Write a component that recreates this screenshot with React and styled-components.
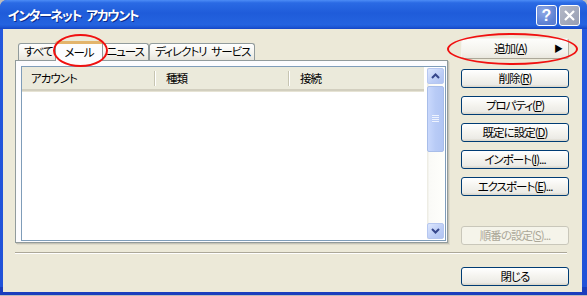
import styled, { createGlobalStyle } from "styled-components";

const GlobalStyle = createGlobalStyle`
  html, body {
    margin: 0;
    padding: 0;
    background: #bcbcbc;
  }
  body {
    font-family: "Noto Sans CJK JP", "Noto Sans", sans-serif;
    font-size: 11.5px;
    letter-spacing: -1px;
    font-feature-settings: "palt" 1;
    color: #000;
  }
`;

const Window = styled.div`
  position: relative;
  width: 587px;
  height: 295px;
  display: flex;
  flex-direction: column;
  border-radius: 7px 7px 0 0;
  overflow: hidden;
  background: #2152d8;
`;

const TitleBar = styled.div`
  height: 29px;
  flex: none;
  display: flex;
  align-items: center;
  padding: 0 7px 0 8px;
  box-sizing: border-box;
  background: linear-gradient(
    to bottom,
    #4c8cf6 0%,
    #2a6ae4 10%,
    #1f5cda 45%,
    #2463e0 85%,
    #1d57d5 93%,
    #1545c6 100%
  );
`;

const Title = styled.div`
  flex: 1;
  color: #fff;
  font-weight: bold;
  font-size: 13px;
  letter-spacing: -1.4px;
  text-shadow: 1px 1px 0 #0a2a8a;
  padding-bottom: 1px;
  white-space: pre;
`;

const Controls = styled.div`
  display: flex;
  gap: 2px;
  padding-top: 2px;
`;

const CtrlButton = styled.div`
  width: 21px;
  height: 21px;
  box-sizing: border-box;
  border: 1px solid #fff;
  border-radius: 3px;
  display: flex;
  align-items: center;
  justify-content: center;
  color: #fff;
  font-family: "Liberation Sans", sans-serif;
  font-weight: bold;
  font-size: 16px;
  letter-spacing: 0;
  background: ${(p) =>
    p.$kind === "close"
      ? "linear-gradient(135deg, #b4b9c7, #979eb3)"
      : "radial-gradient(circle at 35% 30%, #8fa9e6, #5c7fd2 70%)"};
`;

const Frame = styled.div`
  flex: 1;
  display: flex;
  padding: 0 5px 3px 3px;
  background: linear-gradient(to bottom, #2458dd 0%, #2152d8 97%, #1a3dbd 97%);
`;

const Body = styled.div`
  flex: 1;
  background: #ece9d8;
  box-sizing: border-box;
  padding: 9px 13px 0 12px;
  display: grid;
  grid-template-columns: 435px 108px;
  grid-template-rows: 207px auto auto;
  column-gap: 11px;
`;

const LeftCol = styled.div`
  margin-top: 3px;
  display: flex;
  flex-direction: column;
`;

const TabStrip = styled.div`
  height: 19px;
  display: flex;
  align-items: flex-end;
  padding-left: 3px;
  position: relative;
  z-index: 1;
`;

const Tab = styled.div`
  box-sizing: border-box;
  height: ${(p) => (p.$active ? "20px" : "17px")};
  margin: ${(p) => (p.$active ? "0 -2px -1px -2px" : "0")};
  padding: ${(p) => (p.$active ? "0 8px" : "0 4px 0 5px")};
  border: 1px solid #919b9c;
  border-bottom: none;
  border-radius: 3px 3px 0 0;
  line-height: ${(p) => (p.$active ? "16px" : "15px")};
  white-space: pre;
  z-index: ${(p) => (p.$active ? 2 : 0)};
  background: ${(p) =>
    p.$active ? "#fcfcfe" : "linear-gradient(to bottom, #ffffff, #f3f2ec 60%, #e7e5dc)"};
  border-top: ${(p) => (p.$active ? "3px solid #e3b46c" : "1px solid #919b9c")};
`;

const Panel = styled.div`
  height: 183px;
  width: 433px;
  box-sizing: border-box;
  border: 1px solid #919b9c;
  background: #fcfcfe;
  box-shadow: 1px 1px 0 #c5c3b6, 2px 2px 0 #dedbcc;
  padding: 5px 1px 1px 5px;
  display: flex;
`;

const List = styled.div`
  flex: 1;
  border: 1px solid #7f9db9;
  background: #fff;
  display: flex;
`;

const ListMain = styled.div`
  flex: 1;
  display: flex;
  flex-direction: column;
`;

const Header = styled.div`
  height: 22px;
  display: flex;
  background: #ebeadb;
  border-bottom: 2px solid #d2cfbf;
  box-shadow: 0 1px 0 #e6e3d4;
`;

const HeadCell = styled.div`
  position: relative;
  width: ${(p) => (p.$w ? `${p.$w}px` : "auto")};
  flex: ${(p) => (p.$w ? "none" : 1)};
  padding-left: ${(p) => p.$pad}px;
  line-height: 22px;
  box-sizing: border-box;

  &::after {
    content: "";
    display: ${(p) => (p.$w ? "block" : "none")};
    position: absolute;
    right: 0;
    top: 4px;
    bottom: 3px;
    width: 1px;
    background: #c7c5b2;
    box-shadow: 1px 0 0 #fff;
  }
`;

const ScrollBar = styled.div`
  width: 17px;
  margin: 1px 1px 1px 3px;
  display: flex;
  flex-direction: column;
  background: linear-gradient(to right, #eeede5 0, #eeede5 1px, #fafaf7 2px, #fefefb);
`;

const ScrollBtn = styled.div`
  height: 16px;
  box-sizing: border-box;
  border: 1px solid #b6c7f0;
  border-radius: 2px;
  background: linear-gradient(135deg, #dde7fd, #bccdf6 60%, #b0c3f2);
  display: flex;
  align-items: center;
  justify-content: center;
  margin-top: ${(p) => (p.$down ? "auto" : "0")};
`;

const Thumb = styled.div`
  height: 66px;
  margin-top: 2px;
  box-sizing: border-box;
  border: 1px solid #a8bde9;
  border-radius: 2px;
  background: linear-gradient(to right, #c9d8fc, #b8cbf6 50%, #b1c5f4);
  display: flex;
  align-items: center;
  justify-content: center;
`;

const Grip = styled.div`
  width: 7px;
  height: 8px;
  background: repeating-linear-gradient(
    to bottom,
    #eef3fe 0,
    #eef3fe 1px,
    #b8cbf6 1px,
    #b8cbf6 2px
  );
`;

const RightCol = styled.div`
  display: flex;
  flex-direction: column;
  gap: 8px;
`;

const Button = styled.div`
  height: ${(p) => (p.$tall ? "21px" : "19px")};
  box-sizing: border-box;
  border: 1px solid ${(p) => (p.$disabled ? "#c9c7ba" : "#003c74")};
  border-radius: 3px;
  background: ${(p) =>
    p.$disabled
      ? "#f5f4ea"
      : "linear-gradient(to bottom, #ffffff, #f4f3ee 50%, #ecebe6 85%, #d8d4c8)"};
  color: ${(p) => (p.$disabled ? "#aca899" : "#000")};
  display: flex;
  align-items: center;
  justify-content: center;
  line-height: 1;
  white-space: nowrap;
  margin-top: ${(p) => (p.$bottom ? "auto" : "0")};
  margin-bottom: ${(p) => (p.$tall ? "2px" : "0")};
`;

const MenuButton = styled(Button)`
  border-color: #f4f3ee #b4b1a3 #aca899 #f4f3ee;
  padding: 0 5px 0 6px;
  background: linear-gradient(to bottom, #fdfdfb, #f3f2ec 70%, #e9e7de);
`;

const Label = styled.span`
  flex: 1;
  text-align: center;
`;

const Arrow = styled.span`
  font-size: 9px;
  letter-spacing: 0;
  width: 10px;
  text-align: right;
`;

const Separator = styled.div`
  grid-column: 1 / -1;
  margin: 7px 2px 0 0;
  height: 1px;
  background: #aca899;
  border-bottom: 1px solid #fff;
`;

const CloseRow = styled.div`
  grid-column: 2;
  margin-top: 7px;
`;

const Mark = styled.div`
  position: absolute;
  left: ${(p) => p.$x}px;
  top: ${(p) => p.$y}px;
  width: ${(p) => p.$w}px;
  height: ${(p) => p.$h}px;
  box-sizing: border-box;
  border: 2px solid #f01010;
  border-radius: 50%;
  pointer-events: none;
  z-index: 5;
`;

const Chevron = ({ down }) => (
  <svg width="9" height="6" viewBox="0 0 9 6">
    <polyline
      points={down ? "1,1 4.5,4.5 8,1" : "1,5 4.5,1.5 8,5"}
      fill="none"
      stroke="#36478c"
      strokeWidth="2"
    />
  </svg>
);

const App = () => {
  return (
    <>
      <GlobalStyle />
      <Window>
        <TitleBar>
          <Title>{"インターネット\u2002アカウント"}</Title>
          <Controls>
            <CtrlButton>?</CtrlButton>
            <CtrlButton $kind="close">
              <svg width="11" height="11" viewBox="0 0 11 11">
                <path d="M1 1L10 10M10 1L1 10" stroke="#fff" strokeWidth="2.2" />
              </svg>
            </CtrlButton>
          </Controls>
        </TitleBar>
        <Frame>
          <Body>
            <LeftCol>
              <TabStrip>
                <Tab>すべて</Tab>
                <Tab $active>メール</Tab>
                <Tab>ニュース</Tab>
                <Tab>{"ディレクトリ\u2002サービス"}</Tab>
              </TabStrip>
              <Panel>
                <List>
                  <ListMain>
                    <Header>
                      <HeadCell $w={133} $pad={9}>
                        アカウント
                      </HeadCell>
                      <HeadCell $w={134} $pad={11}>
                        種類
                      </HeadCell>
                      <HeadCell $pad={11}>接続</HeadCell>
                    </Header>
                  </ListMain>
                  <ScrollBar>
                    <ScrollBtn>
                      <Chevron />
                    </ScrollBtn>
                    <Thumb>
                      <Grip />
                    </Thumb>
                    <ScrollBtn $down>
                      <Chevron down />
                    </ScrollBtn>
                  </ScrollBar>
                </List>
              </Panel>
            </LeftCol>
            <RightCol>
              <MenuButton $tall>
                <Label>
                  追加(<u>A</u>)
                </Label>
                <Arrow>▶</Arrow>
              </MenuButton>
              <Button>
                削除(<u>R</u>)
              </Button>
              <Button>
                プロパティ(<u>P</u>)
              </Button>
              <Button>
                既定に設定(<u>D</u>)
              </Button>
              <Button>
                インポート(<u>I</u>)...
              </Button>
              <Button>
                エクスポート(<u>E</u>)...
              </Button>
              <Button $disabled $bottom>
                順番の設定(<u>S</u>)...
              </Button>
            </RightCol>
            <Separator />
            <CloseRow>
              <Button>閉じる</Button>
            </CloseRow>
          </Body>
        </Frame>
        <Mark $x={53} $y={34} $w={55} $h={33} />
        <Mark $x={447} $y={33} $w={131} $h={32} />
      </Window>
    </>
  );
};

export default App;
